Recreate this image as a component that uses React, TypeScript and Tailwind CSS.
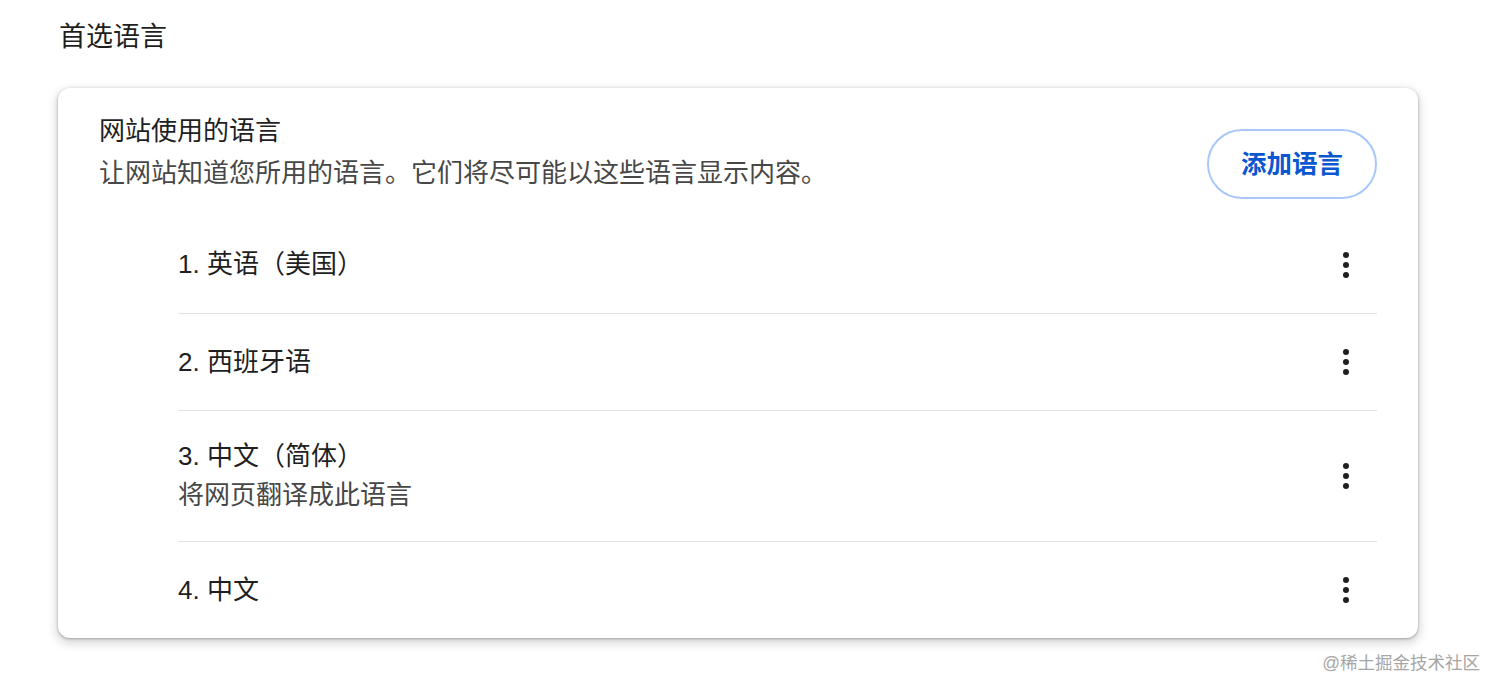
import React from "react";

const Kebab = () => (
  <svg width="24" height="30" viewBox="0 0 24 30" className="shrink-0">
    <circle cx="12" cy="5" r="3" fill="#1f1f1f" />
    <circle cx="12" cy="15" r="3" fill="#1f1f1f" />
    <circle cx="12" cy="25" r="3" fill="#1f1f1f" />
  </svg>
);

const rows: { title: string; sub?: string }[] = [
  { title: "1. 英语（美国）" },
  { title: "2. 西班牙语" },
  { title: "3. 中文（简体）", sub: "将网页翻译成此语言" },
  { title: "4. 中文" },
];

export default function App() {
  return (
    <div
      className="relative w-[1488px] h-[680px] bg-white overflow-hidden"
      style={{ fontFamily: '"Liberation Sans", "Noto Sans CJK SC", sans-serif' }}
    >
      <div className="pl-[59px] pt-[19px]">
        <div className="text-[27px] leading-[36px] text-[#1f1f1f]">首选语言</div>
        <div className="mt-[33px] w-[1360px] h-[550px] -ml-[1px] rounded-[12px] bg-white shadow-[0_1px_3px_rgba(0,0,0,0.3),0_4px_8px_3px_rgba(0,0,0,0.12)]">
          <div className="flex items-start justify-between h-[128px] pl-[41px] pr-[41px]">
            <div className="pt-[22px]">
              <div className="text-[26px] leading-[42px] text-[#1f1f1f]">网站使用的语言</div>
              <div className="text-[26px] leading-[42px] text-[#474747]">
                让网站知道您所用的语言。它们将尽可能以这些语言显示内容。
              </div>
            </div>
            <button className="mt-[41px] h-[70px] w-[170px] rounded-full border-2 border-[#a8c7fa] text-[#0b57d0] text-[25.5px] font-bold bg-white flex items-center justify-center">
              添加语言
            </button>
          </div>
          <div className="pl-[120px] pr-[41px]">
            {rows.map((r, i) => (
              <div
                key={i}
                className={`flex items-center justify-between ${r.sub ? "h-[131px]" : "h-[97px]"} ${i > 0 ? "border-t border-[#e3e3e3]" : ""}`}
              >
                <div>
                  <div className="text-[26px] leading-[39px] text-[#1f1f1f]">{r.title}</div>
                  {r.sub && (
                    <div className="text-[26px] leading-[39px] text-[#474747]">{r.sub}</div>
                  )}
                </div>
                <div className="mr-[19px]">
                  <Kebab />
                </div>
              </div>
            ))}
          </div>
        </div>
      </div>
      <div className="absolute right-[8px] top-[650px] text-[17.5px] leading-[26px] text-[#a6a6a6]">
        @稀土掘金技术社区
      </div>
    </div>
  );
}
